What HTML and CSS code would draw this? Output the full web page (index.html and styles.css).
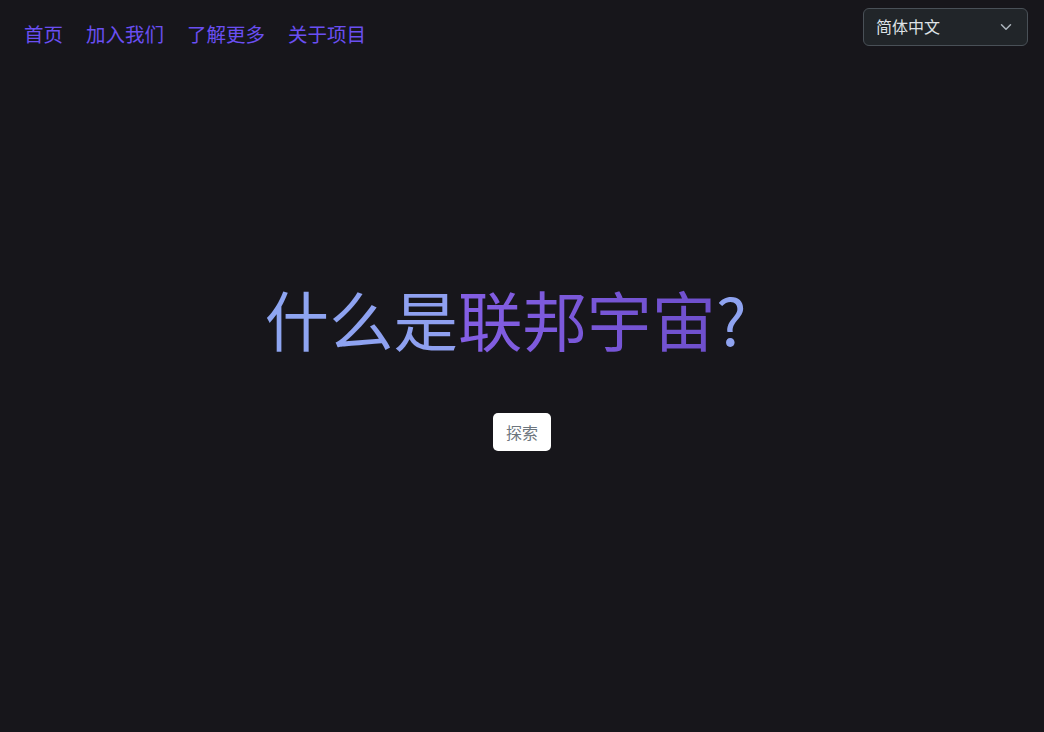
FILE: index.html
```html
<!DOCTYPE html>
<html lang="zh-CN">
<head>
<meta charset="utf-8">
<title>联邦宇宙</title>
<link rel="stylesheet" href="styles.css">
</head>
<body>
<header class="topbar">
  <nav class="nav">
    <a class="nav-link" href="#">首页</a>
    <a class="nav-link" href="#">加入我们</a>
    <a class="nav-link" href="#">了解更多</a>
    <a class="nav-link" href="#">关于项目</a>
  </nav>
  <div class="lang-select">
    <span class="lang-text">简体中文</span>
    <svg class="chevron" width="12" height="12" viewBox="0 0 16 16"><path d="M2 5l6 6 6-6" fill="none" stroke="#adb5bd" stroke-width="2" stroke-linecap="round" stroke-linejoin="round"/></svg>
  </div>
</header>
<main class="hero">
  <h1 class="title"><span class="t-what">什么是</span><span class="t-fedi">联邦宇宙</span><span class="t-q">?</span></h1>
  <button class="explore">探索</button>
</main>
</body>
</html>
```
FILE: styles.css
```css
* { box-sizing: border-box; }
html, body { margin: 0; padding: 0; }
body {
  background: #17161b;
  font-family: "Noto Sans CJK SC", "Noto Sans", sans-serif;
  height: 100vh;
  overflow: hidden;
  position: relative;
}
.topbar {
  position: absolute;
  top: 0; left: 0; right: 0;
  display: flex;
  justify-content: space-between;
  align-items: flex-start;
  padding: 8px 16px 0 24px;
}
.nav {
  display: flex;
  gap: 23px;
  padding-top: 13px;
}
.nav-link {
  color: #6a4ff2;
  font-size: 19.5px;
  line-height: 26px;
  text-decoration: none;
}
.lang-select {
  width: 165px;
  height: 38px;
  background: #212529;
  border: 1px solid #495057;
  border-radius: 6px;
  display: flex;
  align-items: center;
  justify-content: space-between;
  padding: 0 15px 0 12px;
}
.lang-text {
  color: #dee2e6;
  font-size: 16px;
  margin-top: -2px;
}
.chevron { display: block; }
.hero {
  height: 100vh;
  display: flex;
  flex-direction: column;
  align-items: center;
  justify-content: center;
  padding-bottom: 3px;
}
.title {
  margin: 0 33px 55px 0;
  font-size: 64.5px;
  font-weight: 400;
  line-height: 80px;
}
.t-what {
  background: linear-gradient(90deg, #8ea6f2, #8f9ff0);
  -webkit-background-clip: text;
  background-clip: text;
  color: transparent;
}
.t-fedi {
  background: linear-gradient(90deg, #845fe4, #6e4fcc);
  -webkit-background-clip: text;
  background-clip: text;
  color: transparent;
}
.t-q { color: #8fa3f0; }
.explore {
  font-family: inherit;
  font-size: 16px;
  color: #6c757d;
  background: #fff;
  border: none;
  border-radius: 5px;
  width: 58px;
  height: 38px;
  padding: 0;
}
```
